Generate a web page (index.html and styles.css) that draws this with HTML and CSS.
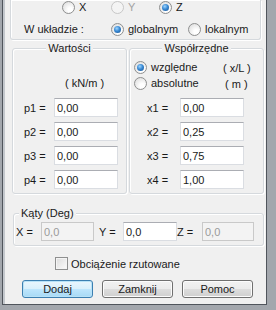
FILE: index.html
```html
<!DOCTYPE html>
<html>
    <head>
        <title>Obciążenie</title>
        <link rel="stylesheet" href="styles.css">
    </head>
    <body>
        <div class="frame">
            <div class="edge">
                <div class="dialog">

                    <div class="group top-group">
                        <div class="axis-row">
                            <label class="option axis-x"><span class="radio"></span>X</label>
                            <label class="option axis-y disabled"><span class="radio"></span>Y</label>
                            <label class="option"><span class="radio checked"></span>Z</label>
                        </div>
                        <div class="system-row">
                            <span class="system-label">W układzie :</span>
                            <label class="option opt-global"><span class="radio checked"></span>globalnym</label>
                            <label class="option"><span class="radio"></span>lokalnym</label>
                        </div>
                    </div>

                    <div class="panels">
                        <div class="group values">
                            <div class="group-title">Wartości</div>
                            <div class="head head-values"><span class="unit">( kN/m )</span></div>
                            <div class="fields">
                                <div class="field"><span class="field-label">p1 =</span><input class="text" value="0,00"></div>
                                <div class="field"><span class="field-label">p2 =</span><input class="text" value="0,00"></div>
                                <div class="field"><span class="field-label">p3 =</span><input class="text" value="0,00"></div>
                                <div class="field"><span class="field-label">p4 =</span><input class="text" value="0,00"></div>
                            </div>
                        </div>

                        <div class="group coords">
                            <div class="group-title">Współrzędne</div>
                            <div class="head head-coords">
                                <div class="mode-row">
                                    <label class="option mode"><span class="radio checked"></span>względne</label>
                                    <span class="unit">( x/L )</span>
                                </div>
                                <div class="mode-row">
                                    <label class="option mode"><span class="radio"></span>absolutne</label>
                                    <span class="unit unit-m">( m )</span>
                                </div>
                            </div>
                            <div class="fields">
                                <div class="field"><span class="field-label">x1 =</span><input class="text" value="0,00"></div>
                                <div class="field"><span class="field-label">x2 =</span><input class="text" value="0,25"></div>
                                <div class="field"><span class="field-label">x3 =</span><input class="text" value="0,75"></div>
                                <div class="field"><span class="field-label">x4 =</span><input class="text" value="1,00"></div>
                            </div>
                        </div>
                    </div>

                    <div class="group angles">
                        <div class="group-title">Kąty (Deg)</div>
                        <div class="angle-row">
                            <span class="angle-label">X =</span>
                            <input class="text angle-x" value="0,0" disabled>
                            <span class="angle-label label-y">Y =</span>
                            <input class="text angle-y" value="0,0">
                            <span class="angle-label">Z =</span>
                            <input class="text angle-z" value="0,0" disabled>
                        </div>
                    </div>

                    <label class="check-row"><span class="checkbox"></span>Obciążenie rzutowane</label>

                    <div class="buttons">
                        <button class="default">Dodaj</button>
                        <button>Zamknij</button>
                        <button>Pomoc</button>
                    </div>

                </div>
            </div>
        </div>
    </body>
</html>
```
FILE: styles.css
```css
body {
    margin: 0;
    background-color: #a3a7ad;
    font-family: "Liberation Sans", Arial, sans-serif;
    font-size: 11px;
    color: #1a1a1a;
}
.frame {
    width: 276px;
    height: 310px;
    box-sizing: border-box;
    padding: 0 9px 5px 2px;
}
.edge {
    border: 1px solid #50555c;
    border-top: none;
    padding-left: 2px;
    background-color: #c3c7cc;
}
.dialog {
    height: 304px;
    background-color: #f0f0f0;
    overflow: hidden;
}

/* group boxes */
.group {
    border: 1px solid #d5d9dd;
    border-radius: 3px;
    box-shadow: inset 1px 1px 0 #fff, 1px 1px 0 #fff;
}
.group-title {
    width: fit-content;
    margin: -7px auto 0;
    padding: 0 2px;
    line-height: 13px;
    background-color: #f0f0f0;
}

/* top box */
.top-group {
    margin-left: 5px;
    width: 249px;
    height: 39px;
    border-top: none;
    border-radius: 0 0 3px 3px;
}
.axis-row,
.system-row {
    display: flex;
    align-items: center;
    height: 14px;
}
.axis-row {
    padding-left: 51px;
}
.system-row {
    margin-top: 8px;
    padding-left: 13px;
}
.axis-x {
    width: 49px;
}
.axis-y {
    width: 48px;
}
.system-label {
    width: 87px;
}
.opt-global {
    width: 77px;
}

/* radios and checkbox */
.option {
    display: flex;
    align-items: center;
    gap: 4px;
    line-height: 13px;
}
.radio {
    display: inline-flex;
    align-items: center;
    justify-content: center;
    width: 13px;
    height: 13px;
    box-sizing: border-box;
    border: 1px solid #8e8f8f;
    border-radius: 50%;
    background: radial-gradient(circle at 65% 70%, #ffffff 20%, #dcdcdc 90%);
}
.radio.checked::after {
    content: '';
    width: 7px;
    height: 7px;
    border-radius: 50%;
    background: radial-gradient(circle at 40% 35%, #9fd6ff 0, #3a8ad4 45%, #164f8e 100%);
}
.disabled {
    color: #a3a3a3;
}
.disabled .radio {
    border-color: #c7c7c7;
    background: #f4f4f4;
}
.checkbox {
    width: 13px;
    height: 13px;
    box-sizing: border-box;
    border: 1px solid #8e8f8f;
    background: linear-gradient(135deg, #dcdcdc, #fbfbfb);
    box-shadow: inset 0 0 0 1px #f4f4f4;
}

/* value / coordinate boxes */
.panels {
    display: flex;
    gap: 2px;
    margin-top: 8px;
    padding-left: 7px;
}
.values {
    width: 113px;
}
.coords {
    width: 133px;
}
.head {
    height: 29px;
    margin-top: 6px;
}
.head-values {
    display: flex;
    align-items: flex-end;
    padding-left: 52px;
    line-height: 13px;
}
.head-coords {
    display: flex;
    flex-direction: column;
    gap: 3px;
    padding-left: 4px;
}
.mode-row {
    display: flex;
    align-items: center;
    height: 13px;
}
.mode {
    width: 89px;
}
.unit-m {
    padding-left: 2px;
}
.fields {
    display: flex;
    flex-direction: column;
    gap: 5px;
    margin-top: 8px;
    padding-bottom: 4px;
}
.field {
    display: flex;
    align-items: center;
    height: 19px;
}
.values .field {
    padding-left: 11px;
}
.values .field-label {
    width: 30px;
}
.coords .field {
    padding-left: 17px;
}
.coords .field-label {
    width: 33px;
}

/* text boxes */
.text {
    width: 64px;
    height: 19px;
    box-sizing: border-box;
    margin: 0;
    padding: 0 0 0 2px;
    border: 1px solid #dadde2;
    border-top-color: #abadb3;
    background-color: #fff;
    font-family: "Liberation Sans", Arial, sans-serif;
    font-size: 11px;
    color: #1a1a1a;
    outline: none;
}
.text:disabled {
    background-color: #f3f3f3;
    border-color: #c9c9c9;
    color: #9a9a9a;
}

/* angles */
.angles {
    width: 249px;
    margin: 19px 0 0 8px;
}
.angles .group-title {
    margin-left: 5px;
}
.angle-row {
    display: grid;
    grid-template-columns: 25px 53px 29px 54px 25px 52px;
    align-items: center;
    margin-top: 2px;
    padding: 0 0 4px 2px;
}
.label-y {
    padding-left: 5px;
}
.angle-x,
.angle-y,
.angle-z {
    width: auto;
}

/* bottom */
.check-row {
    display: flex;
    align-items: center;
    gap: 3px;
    height: 13px;
    margin-top: 11px;
    padding-left: 50px;
}
.buttons {
    display: flex;
    gap: 9px;
    margin-top: 10px;
    padding-left: 17px;
}
.buttons button {
    width: 71px;
    height: 18px;
    padding: 0;
    border: 1px solid #707070;
    border-radius: 3px;
    background: linear-gradient(#f2f2f2 0, #ebebeb 50%, #dddddd 51%, #cfcfcf 100%);
    box-shadow: inset 0 0 0 1px #fcfcfc;
    font-family: "Liberation Sans", Arial, sans-serif;
    font-size: 11px;
    color: #1a1a1a;
}
.buttons button.default {
    border-color: #3c7fb1;
    background: linear-gradient(#eaf6fd 0, #d9f0fc 50%, #bee6fd 51%, #a7d9f5 100%);
    box-shadow: inset 0 0 0 1px #b8e2f7;
}
```
